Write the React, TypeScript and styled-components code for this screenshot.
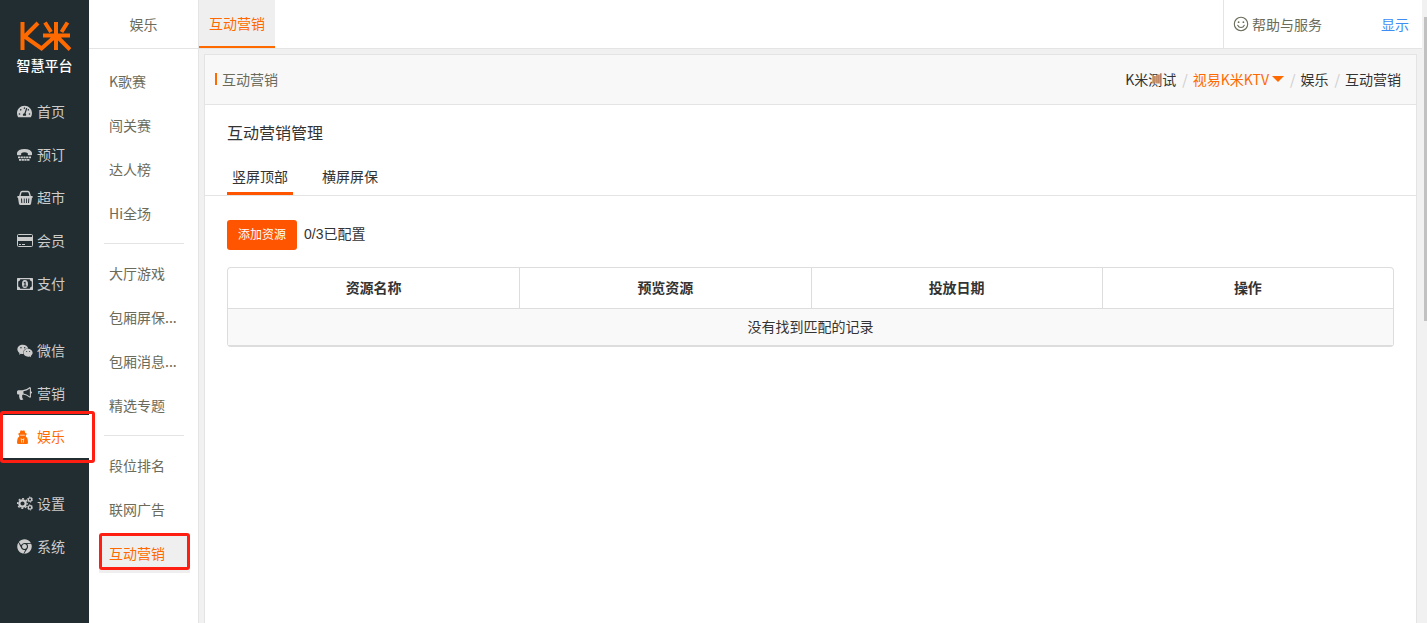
import React from 'react';
import styled, { createGlobalStyle, css } from 'styled-components';
import { FaChrome, FaTachometerAlt, FaWeixin } from 'react-icons/fa';

const GlobalStyle = createGlobalStyle`
  *, *::before, *::after { box-sizing: border-box; }
  body {
    margin: 0;
    background: #fff;
    color: #333;
    font: 14px/20px "Noto Sans CJK SC", sans-serif;
  }
  a { color: inherit; text-decoration: none; }
  ul, ol { list-style: none; margin: 0; padding: 0; }
  h1, h2 { margin: 0; font-weight: 400; }
`;

const orange = '#ff6a00';
const line = '#e4e4e4';

const Page = styled.div`
  display: flex;
  min-height: 100vh;
`;

/* Primary navigation */
const Sidebar = styled.nav`
  flex: 0 0 89px;
  background: #222d32;
  color: #ccc;
`;

const Brand = styled.a`
  display: flex;
  flex-direction: column;
  align-items: center;
  height: 90px;
  padding-top: 20px;
  color: #fff;
  font-size: 14px;
  font-weight: 500;
  line-height: 20px;
  svg { display: block; margin-bottom: 3px; }
`;

const NavGroup = styled.ul`
  margin-bottom: 24px;
`;

const Highlight = styled.span`
  position: absolute;
  inset: -4px -6px -5px 0;
  z-index: 2;
  border: 3px solid #ff1e12;
  border-radius: 3px;
  pointer-events: none;
`;

const NavLink = styled.a<{ $active?: boolean }>`
  position: relative;
  display: flex;
  align-items: center;
  gap: 4px;
  height: 43px;
  padding: 0 0 2px 17px;
  ${(p) => p.$active && css`background: #fff; color: ${orange};`}
`;

const IconBox = styled.span`
  display: flex;
  width: 16px;
  padding-top: 2px;
  svg { display: block; }
`;

/* Secondary navigation */
const SubSidebar = styled.nav`
  flex: 0 0 110px;
  border-right: 1px solid ${line};
  color: #6b6b5b;
`;

const SubTitle = styled.h2`
  height: 49px;
  border-bottom: 1px solid ${line};
  font-size: 14px;
  line-height: 48px;
  text-align: center;
`;

const SubMenu = styled.div`
  padding: 11px 8px 0 10px;
`;

const SubGroup = styled.ul`
  & + & {
    position: relative;
    padding-top: 8px;
    margin-top: 8px;
  }
  & + &::before {
    content: '';
    position: absolute;
    top: -1px;
    left: 5px;
    right: 6px;
    border-top: 1px solid ${line};
  }
`;

const SubItem = styled.li`
  padding: 3px 0;
`;

const SubLink = styled.a<{ $active?: boolean }>`
  position: relative;
  display: block;
  height: 38px;
  padding-left: 10px;
  line-height: 36px;
  ${(p) => p.$active && css`background: #efefef; color: ${orange};`}
`;

const SubHighlight = styled(Highlight)`
  inset: -2px 0 3px 0;
`;

/* Main area */
const Main = styled.div`
  display: flex;
  flex: 1;
  flex-direction: column;
  min-width: 0;
`;

const TopBar = styled.header`
  display: flex;
  justify-content: space-between;
  height: 49px;
  border-bottom: 1px solid ${line};
`;

const PageTab = styled.a`
  height: 48px;
  padding: 0 10px;
  border-bottom: 2px solid ${orange};
  background: #efefef;
  color: ${orange};
  line-height: 46px;
`;

const TopLinks = styled.div`
  display: flex;
  align-items: center;
  justify-content: space-between;
  width: 199px;
  padding: 0 13px 0 9px;
  border-left: 1px solid ${line};
`;

const HelpLink = styled.a`
  display: flex;
  align-items: center;
  gap: 3px;
  color: #6b6b5b;
`;

const ShowLink = styled.a`
  color: #3d8df5;
`;

const Workspace = styled.main`
  display: flex;
  flex: 1;
  padding: 5px 5px 0;
  background: #f1f1f1;
`;

const Card = styled.section`
  flex: 1;
  border: 1px solid ${line};
  border-bottom: 0;
  background: #fff;
`;

const CardHeader = styled.div`
  display: flex;
  align-items: center;
  justify-content: space-between;
  height: 50px;
  padding: 0 15px 2px 10px;
  border-bottom: 1px solid ${line};
  background: #f8f8f8;
`;

const CardTitle = styled.h1`
  display: flex;
  align-items: center;
  gap: 5px;
  color: #6b6b5b;
  font-size: 14px;
  &::before { content: ''; width: 2px; height: 12px; background: ${orange}; }
`;

const Crumbs = styled.ol`
  display: flex;
  align-items: center;
  li + li::before { content: '/'; padding: 0 5px 0 6px; color: #ccc; }
`;

const StoreLink = styled.a`
  color: ${orange};
  &::after {
    content: '';
    display: inline-block;
    margin: 0 0 3px 3px;
    border: 6px solid transparent;
    border-top-color: ${orange};
    border-bottom: 0;
  }
`;

const SectionTitle = styled.h2`
  padding: 15px 22px 0;
  font-size: 16px;
  line-height: 24px;
`;

const Tabs = styled.div`
  display: flex;
  gap: 24px;
  margin-top: 20px;
  padding: 0 22px;
  border-bottom: 1px solid ${line};
`;

const Tab = styled.button<{ $active?: boolean }>`
  height: 31px;
  padding: 0 5px 5px;
  border: 0;
  border-bottom: 3px solid ${(p) => (p.$active ? '#ff5500' : 'transparent')};
  background: none;
  color: #333;
  font: inherit;
`;

const Content = styled.div`
  padding: 24px 22px;
`;

const Toolbar = styled.div`
  display: flex;
  gap: 7px;
  margin-bottom: 17px;
  font-family: "Liberation Sans", "Noto Sans CJK SC", sans-serif;
  line-height: 28px;
`;

const AddButton = styled.button`
  width: 70px;
  height: 30px;
  padding: 0 0 2px;
  border: 0;
  border-radius: 3px;
  background: #ff5500;
  color: #fff;
  font: 12px/28px "Noto Sans CJK SC", sans-serif;
`;

const Table = styled.table`
  width: 100%;
  table-layout: fixed;
  border: 1px solid #ddd;
  border-bottom-width: 2px;
  border-radius: 4px;
  border-spacing: 0;
  th { height: 40px; padding: 0 0 2px; }
  th + th { border-left: 1px solid #ddd; }
  td {
    height: 37px;
    padding: 0 0 2px;
    border-top: 1px solid #ddd;
    background: #f9f9f9;
    text-align: center;
  }
`;

const ScrollRail = styled.div`
  flex: 0 0 5px;
  padding: 17px 0 0 2px;
  background: #f1f1f1;
`;

const ScrollThumb = styled.div`
  height: 304px;
  background: #c1c1c1;
`;

/* Icons */
const PhoneIcon = () => (
  <svg width="15" height="14" viewBox="0 0 15 14" fill="currentColor">
    <path d="M0 6.500V4.800Q1 1 7.500 1T15 4.800v1.700q0 .8-.8.8h-2.600q-.8 0-.8-.8V5.200Q9.500 4.300 7.500 4.300T4.200 5.200v1.300q0 .8-.8.8H.8Q0 7.300 0 6.500z" />
    <path d="M1 9.400h13M2 11.900h11" fill="none" stroke="currentColor" strokeWidth="1.700" strokeDasharray="2.200 .5" />
  </svg>
);

const BasketIcon = () => (
  <svg width="16" height="16" viewBox="0 0 16 16" fill="currentColor">
    <path d="M2.600 7 3.800 2.600Q4.100 1.500 5.200 1.500h5.600q1.100 0 1.400 1.100L13.400 7" fill="none" stroke="currentColor" strokeWidth="1.400" />
    <path fillRule="evenodd" d="M1 6h14q.8 0 .8.9t-.8.9l-.9 5.800Q14 15 12.800 15H3.200Q2 15 1.900 13.600L1 7.800Q.2 7.800.2 6.900T1 6zM4 8.500l.3 4.500h1L5 8.500zM6.800 8.500V13h.9V8.500zM9 8.500V13h.9V8.500zM11.300 8.500 11 13h1l.3-4.500z" />
  </svg>
);

const CardIcon = () => (
  <svg width="16" height="13" viewBox="0 0 16 13" fill="currentColor">
    <rect x=".5" y=".5" width="15" height="12" rx="1" fill="none" stroke="currentColor" />
    <path d="M1 3h14v4H1zM2 10h2v1H2zM5 10h3v1H5z" />
  </svg>
);

const MoneyIcon = () => (
  <svg width="16" height="12" viewBox="0 0 16 12" fill="currentColor">
    <path fillRule="evenodd" d="M.6 0h14.800q.6 0 .6.6v10.800q0 .6-.6.6H.6Q0 12 0 11.400V.6Q0 0 .6 0zM3.300 1.200Q3 3.200 1.200 3.500v5Q3 8.800 3.300 10.800h9.400q.3-2 2.100-2.300v-5q-1.800-.3-2.100-2.300z" />
    <path fillRule="evenodd" d="M8 2q3 .3 3 4t-3 4-3-4 3-4zM7.600 3.700 6.500 4.700l.5.600.5-.3v2.500h-.9v.9h2.900v-.9h-.9V3.700z" />
  </svg>
);

const HornIcon = () => (
  <svg width="15" height="15" viewBox="0 0 1792 1792" fill="currentColor">
    <path d="M1664 640q53 0 90.500 37.500t37.500 90.500-37.500 90.500-90.500 37.500v384q0 52-38 90t-90 38q-417-347-812-380-58 19-91 66t-31 100.500 40 92.500q-20 33-23 65.500t6 58 33.500 55 48 50 61.500 50.500q-29 58-111.500 83t-168.500 11.500-132-55.500q-7-23-29.500-87.500t-32-94.500-23-89-15-101 3.500-98.500 22-110.500h-122q-66 0-113-47t-47-113v-192q0-66 47-113t113-47h480q435 0 896-384 52 0 90 38t38 90v384zm-128 604v-954q-394 302-768 343v270q377 42 768 341z" />
  </svg>
);

const AgentIcon = () => (
  <svg width="11" height="14" viewBox="0 0 11 14" fill="currentColor">
    <path d="M2.800 3 3.300 1Q3.600.2 4.300.4L5.500.8 6.700.4Q7.400.2 7.700 1L8.200 3l1.500.6v1L8.800 5V6.500L10.200 8q.8 2 .8 4.400Q11 14 9.500 14h-8Q0 14 0 12.400.1 10 .8 8L2.200 6.500V5L1.300 4.600v-1z" />
    <path d="M3.200 5.200h4.600M4.200 8.300l.5 4.400M6.800 8.300l-.5 4.400M4.500 9.500h2" fill="none" stroke="#fff" strokeWidth=".7" />
  </svg>
);

const CogsIcon = () => (
  <svg width="16" height="15" viewBox="0 0 16 15" fill="none" stroke="currentColor">
    <circle cx="5.500" cy="7.500" r="3.200" strokeWidth="2.200" />
    <circle cx="5.500" cy="7.500" r="4.800" strokeWidth="1.500" strokeDasharray="1.885 1.885" strokeDashoffset=".94" />
    <circle cx="13" cy="3.600" r="1.700" strokeWidth="1.300" />
    <circle cx="13" cy="3.600" r="2.600" strokeWidth=".9" strokeDasharray="1.360 1.360" />
    <circle cx="13" cy="11.400" r="1.700" strokeWidth="1.300" />
    <circle cx="13" cy="11.400" r="2.600" strokeWidth=".9" strokeDasharray="1.360 1.360" />
  </svg>
);

const SmileIcon = () => (
  <svg width="16" height="16" viewBox="0 0 16 16" fill="none" stroke="currentColor" strokeWidth="1.100">
    <circle cx="8" cy="8" r="6.700" />
    <path d="M4.700 9.300Q5.700 11.500 8 11.500t3.300-2.200" strokeLinecap="round" />
    <circle cx="5.600" cy="6.200" r=".9" fill="currentColor" stroke="none" />
    <circle cx="10.400" cy="6.200" r=".9" fill="currentColor" stroke="none" />
  </svg>
);

const LogoMark = () => (
  <svg width="52" height="32" viewBox="0 0 52 32" fill="none" stroke={orange} strokeWidth="4">
    <path d="M3.500 2v28M19 3 5.500 16.500 22.500 28.500 36.500 16M24 15.500h27M37 2v28M26 2.500l6 9.500M48.500 2.500l-6 9.500M38 16.500 51 29.500" />
  </svg>
);

const navGroups = [
  [
    { label: '首页', icon: <FaTachometerAlt size={15} /> },
    { label: '预订', icon: <PhoneIcon /> },
    { label: '超市', icon: <BasketIcon /> },
    { label: '会员', icon: <CardIcon /> },
    { label: '支付', icon: <MoneyIcon /> },
  ],
  [
    { label: '微信', icon: <FaWeixin size={16} /> },
    { label: '营销', icon: <HornIcon /> },
    { label: '娱乐', icon: <AgentIcon />, active: true },
  ],
  [
    { label: '设置', icon: <CogsIcon /> },
    { label: '系统', icon: <FaChrome size={15} /> },
  ],
];

const subGroups = [
  ['K歌赛', '闯关赛', '达人榜', 'Hi全场'],
  ['大厅游戏', '包厢屏保...', '包厢消息...', '精选专题'],
  ['段位排名', '联网广告', '互动营销'],
];

const columns = ['资源名称', '预览资源', '投放日期', '操作'];

export default function App() {
  return (
    <>
      <GlobalStyle />
      <Page>
        <Sidebar>
          <Brand href="#">
            <LogoMark />
            智慧平台
          </Brand>
          {navGroups.map((group, i) => (
            <NavGroup key={i}>
              {group.map((item: { label: string; icon: React.ReactNode; active?: boolean }) => (
                <li key={item.label}>
                  <NavLink href="#" $active={item.active}>
                    <IconBox>{item.icon}</IconBox>
                    {item.label}
                    {item.active && <Highlight />}
                  </NavLink>
                </li>
              ))}
            </NavGroup>
          ))}
        </Sidebar>

        <SubSidebar>
          <SubTitle>娱乐</SubTitle>
          <SubMenu>
            {subGroups.map((group, i) => (
              <SubGroup key={i}>
                {group.map((label) => (
                  <SubItem key={label}>
                    <SubLink href="#" $active={label === '互动营销'}>
                      {label}
                      {label === '互动营销' && <SubHighlight />}
                    </SubLink>
                  </SubItem>
                ))}
              </SubGroup>
            ))}
          </SubMenu>
        </SubSidebar>

        <Main>
          <TopBar>
            <PageTab href="#">互动营销</PageTab>
            <TopLinks>
              <HelpLink href="#"><SmileIcon />帮助与服务</HelpLink>
              <ShowLink href="#">显示</ShowLink>
            </TopLinks>
          </TopBar>
          <Workspace>
            <Card>
              <CardHeader>
                <CardTitle>互动营销</CardTitle>
                <Crumbs>
                  <li>K米测试</li>
                  <li><StoreLink href="#">视易K米KTV</StoreLink></li>
                  <li>娱乐</li>
                  <li>互动营销</li>
                </Crumbs>
              </CardHeader>
              <SectionTitle>互动营销管理</SectionTitle>
              <Tabs role="tablist">
                <Tab type="button" role="tab" aria-selected="true" $active>竖屏顶部</Tab>
                <Tab type="button" role="tab" aria-selected="false">横屏屏保</Tab>
              </Tabs>
              <Content>
                <Toolbar>
                  <AddButton type="button">添加资源</AddButton>
                  <span>0/3已配置</span>
                </Toolbar>
                <Table>
                  <thead>
                    <tr>{columns.map((c) => <th key={c} scope="col">{c}</th>)}</tr>
                  </thead>
                  <tbody>
                    <tr><td colSpan={4}>没有找到匹配的记录</td></tr>
                  </tbody>
                </Table>
              </Content>
            </Card>
          </Workspace>
        </Main>
        <ScrollRail><ScrollThumb /></ScrollRail>
      </Page>
    </>
  );
}
